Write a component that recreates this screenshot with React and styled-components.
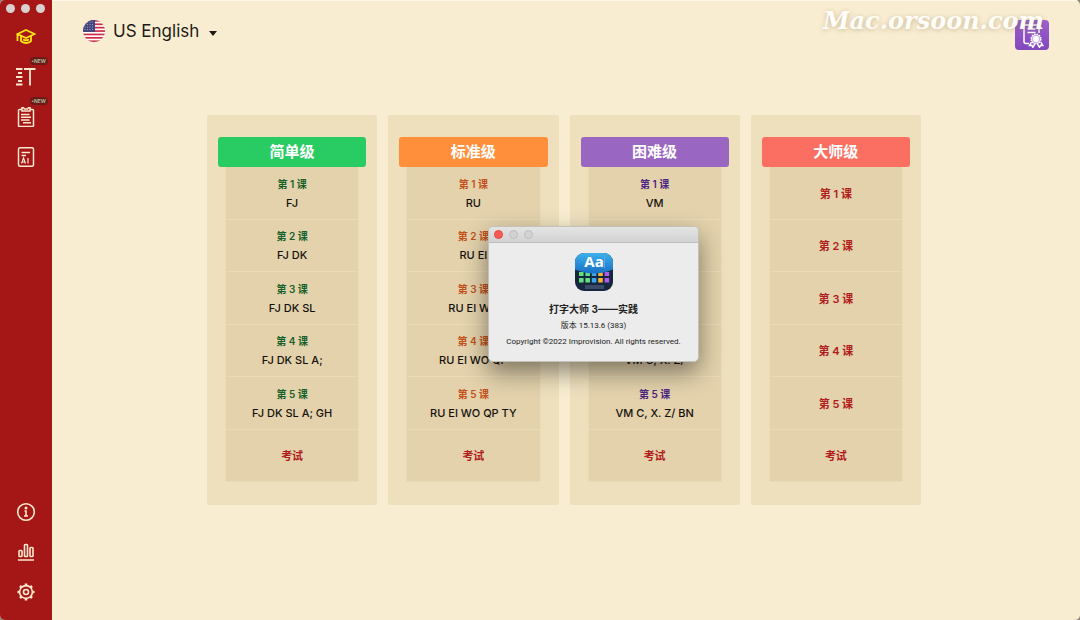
import React, {useState} from "react";
import styled, {createGlobalStyle} from "styled-components";

const levels = [
  {
    name: "简单级",
    color: "#29cc63",
    text: "#17602a",
    lessons: ["FJ", "FJ DK", "FJ DK SL", "FJ DK SL A;", "FJ DK SL A; GH"],
  },
  {
    name: "标准级",
    color: "#ff8f3a",
    text: "#c2501a",
    lessons: ["RU", "RU EI", "RU EI WO", "RU EI WO QP", "RU EI WO QP TY"],
  },
  {
    name: "困难级",
    color: "#9966c2",
    text: "#4b2480",
    lessons: ["VM", "VM C,", "VM C, X.", "VM C, X. Z/", "VM C, X. Z/ BN"],
  },
  {
    name: "大师级",
    color: "#fb6f62",
    text: "#b01c1c",
    lessons: ["", "", "", "", ""],
  },
];

const CapIcon = () => (
  <Icon viewBox="0 0 20 20" strokeWidth="1.8">
    <path d="M1.500 7 10 3l8.500 4-8.500 4zM5 9.200v5c2 2.400 8 2.400 10 0v-5M1.500 7.500V14M7 12.500q3 1.500 6 0" />
  </Icon>
);

const TextIcon = () => (
  <Icon viewBox="0 0 20 20" strokeWidth="1.8">
    <path d="M0 2h6.500M2 6h4M0 10h6.500M2 14h4M0 17.500h6.500M8 2h11.500M14 2v16.500" />
  </Icon>
);

const ClipboardIcon = () => (
  <Icon viewBox="0 0 20 20" strokeWidth="1.5">
    <path d="M6 2.500H3.500q-1 0-1 1v15q0 1 1 1h13q1 0 1-1v-15q0-1-1-1H14M6 .8h1.500l1 1.200h3l1-1.200H14V4H6zM5 7.500h8.500M5 10.200h10M5 13h8.500M7 15.800h8" />
  </Icon>
);

const AiIcon = () => (
  <Icon viewBox="0 0 20 20" strokeWidth="1.5">
    <rect x="2.500" y="0.800" width="15" height="18.400" rx="1.500" />
    <path d="M5.500 5.500h8.500M5.500 8.500H10" />
    <path d="m5.500 16.500 2-5.500 2 5.500M6 15h3M12 11v5.500" strokeWidth="1.200" />
  </Icon>
);

const InfoIcon = () => (
  <Icon viewBox="0 0 20 20" strokeWidth="1.6">
    <circle cx="10" cy="10" r="8.300" />
    <path d="M8.500 9H10v5M8 14h4" />
    <circle cx="10" cy="6" r="0.700" />
  </Icon>
);

const ChartIcon = () => (
  <Icon viewBox="0 0 20 20" strokeWidth="1.6">
    <path d="M2 18h16" />
    <rect x="3" y="8.500" width="3" height="6" rx="0.800" />
    <rect x="8.500" y="2.500" width="3" height="12" rx="0.800" />
    <rect x="14" y="5.500" width="3" height="9" rx="0.800" />
  </Icon>
);

const GearIcon = () => (
  <Icon viewBox="0 0 20 20" strokeWidth="1.6">
    <circle cx="10" cy="10" r="6.400" />
    <circle cx="10" cy="10" r="2.500" />
    <path
      d="M10 1.500v2M10 16.500v2M1.500 10h2M16.500 10h2M4 4l1.400 1.400M14.600 14.600 16 16M4 16l1.400-1.400M14.600 5.400 16 4"
      strokeWidth="2.600"
    />
  </Icon>
);

const Flag = () => (
  <svg width="22" height="22" viewBox="0 0 22 22" aria-hidden="true">
    <defs>
      <clipPath id="flagCircle">
        <circle cx="11" cy="11" r="11" />
      </clipPath>
    </defs>
    <g clipPath="url(#flagCircle)">
      <rect width="22" height="22" fill="#fff" />
      {[0, 3.4, 6.8, 10.2, 13.6, 17, 20.4].map((y) => (
        <rect key={y} y={y} width="22" height="1.700" fill="#cf2b45" />
      ))}
      <rect width="12" height="11.900" fill="#41467f" />
      {[2, 4.5, 7, 9.5].map((y) =>
        [2, 4.5, 7, 9.5].map((x) => (
          <circle key={`${x}-${y}`} cx={x} cy={y} r="0.500" fill="#b9bbd8" />
        ))
      )}
    </g>
  </svg>
);

const CertificateIcon = () => (
  <svg width="24" height="26" viewBox="0 0 24 26" fill="none" stroke="#fff" strokeWidth="1.500">
    <path d="M9 21.500H6q-2 0-2-2V3h15v8M7.500 7h8M7.500 10.500h8" />
    <path d="m11.500 20-2 3.500 2.300-.2 1 2 2-3.300M17.500 22l2 3.300 1-2 2.300.2-2-3.500" />
    <circle cx="16" cy="17" r="4.800" fill="#fff" strokeDasharray="1.500 1" />
    <circle cx="16" cy="17" r="3.800" stroke="#a57bd3" strokeWidth="0.700" />
  </svg>
);

const AppLogo = () => (
  <svg width="40" height="40" viewBox="0 0 40 40" role="img" aria-label="打字大师">
    <defs>
      <clipPath id="logoShape">
        <rect x="1" y="1" width="38" height="38" rx="9" />
      </clipPath>
      <linearGradient id="logoTop" x1="0" y1="0" x2="0" y2="1">
        <stop offset="0" stopColor="#3fb4ee" />
        <stop offset="1" stopColor="#1870c4" />
      </linearGradient>
    </defs>
    <g clipPath="url(#logoShape)">
      <rect width="40" height="40" fill="#17263f" />
      {["#62df82", "#62df82", "#3ea6ea", "#f8b436", "#b05af0"].map((fill, i) => (
        <g key={i} fill={fill}>
          <rect x={5 + i * 6.4} y="20" width="4.600" height="4" />
          <rect x={5 + i * 6.4} y="26" width="4.600" height="4.400" rx="0.500" />
        </g>
      ))}
      <rect x="11" y="33" width="19" height="4" rx="0.500" fill="#3a4a68" />
      <path d="M0 0h40v17q-20 9-40 0z" fill="url(#logoTop)" />
      <text
        x="20"
        y="15"
        textAnchor="middle"
        fill="#fff"
        fontFamily="Open Sans, sans-serif"
        fontSize="15"
        fontWeight="700">
        Aa
      </text>
      <path d="M30.500 4v12" stroke="#5fa9e6" />
    </g>
  </svg>
);

const App = () => {
  const [language, setLanguage] = useState("us");
  const [aboutOpen, setAboutOpen] = useState(true);

  return (
    <Window>
      <GlobalStyle />
      <Sidebar>
        <TrafficLights>
          <Light />
          <Light />
          <Light />
        </TrafficLights>
        <NavGroup>
          <NavButton $active aria-label="课程">
            <CapIcon />
          </NavButton>
          <NavButton aria-label="文本">
            <TextIcon />
            <NewBadge>•NEW</NewBadge>
          </NavButton>
          <NavButton aria-label="测试">
            <ClipboardIcon />
            <NewBadge>•NEW</NewBadge>
          </NavButton>
          <NavButton aria-label="AI">
            <AiIcon />
          </NavButton>
        </NavGroup>
        <NavGroup $bottom>
          <NavButton aria-label="关于" onClick={() => setAboutOpen(true)}>
            <InfoIcon />
          </NavButton>
          <NavButton aria-label="统计">
            <ChartIcon />
          </NavButton>
          <NavButton aria-label="设置">
            <GearIcon />
          </NavButton>
        </NavGroup>
      </Sidebar>

      <Main>
        <TopBar>
          <LanguagePicker>
            <Flag />
            <LanguageSelect
              aria-label="Language"
              value={language}
              onChange={(e) => setLanguage(e.target.value)}>
              <option value="us">US English</option>
            </LanguageSelect>
            <Caret viewBox="0 0 8 5">
              <path d="M0 0h8L4 5z" />
            </Caret>
          </LanguagePicker>
          <CertificateButton aria-label="证书">
            <CertificateIcon />
          </CertificateButton>
          <Watermark>Mac.orsoon.com</Watermark>
        </TopBar>

        <Levels>
          {levels.map((level) => (
            <Level key={level.name}>
              <LevelTitle $color={level.color}>{level.name}</LevelTitle>
              <Lessons>
                {level.lessons.map((keys, i) => (
                  <Lesson key={i}>
                    <LessonName $color={level.text} $large={!keys}>
                      第 {i + 1} 课
                    </LessonName>
                    {keys && <LessonKeys>{keys}</LessonKeys>}
                  </Lesson>
                ))}
                <Lesson>
                  <LessonName $color="#b01c1c" $large>
                    考试
                  </LessonName>
                </Lesson>
              </Lessons>
            </Level>
          ))}
        </Levels>
      </Main>

      {aboutOpen && (
        <About role="dialog" aria-labelledby="about-title">
          <AboutBar>
            <AboutDot $close aria-label="关闭" onClick={() => setAboutOpen(false)} />
            <AboutDot disabled aria-label="最小化" />
            <AboutDot disabled aria-label="缩放" />
          </AboutBar>
          <AboutBody>
            <AppLogo />
            <AboutTitle id="about-title">打字大师 3——实践</AboutTitle>
            <AboutText>版本 15.13.6 (383)</AboutText>
            <AboutText>Copyright ©2022 Improvision. All rights reserved.</AboutText>
          </AboutBody>
        </About>
      )}
    </Window>
  );
};

export default App;

const GlobalStyle = createGlobalStyle`
  * {
    box-sizing: border-box;
  }
  body {
    margin: 0;
    background: #8d8578;
    font-family: Inter, "Noto Sans CJK SC", sans-serif;
  }
  button, select {
    font-family: inherit;
    border: 0;
    padding: 0;
    background: none;
    cursor: pointer;
  }
`;
const Window = styled.div`
  position: relative;
  display: flex;
  min-height: 100vh;
  overflow: hidden;
  border-radius: 5px;
  background: #f9edd1;
`;
const Sidebar = styled.aside`
  display: flex;
  flex-direction: column;
  flex: none;
  width: 52px;
  padding-bottom: 8px;
  background: #a51616;
`;
const TrafficLights = styled.div`
  display: flex;
  gap: 6px;
  height: 17px;
  padding: 4px 6px;
`;
const Light = styled.span`
  width: 9px;
  height: 9px;
  border-radius: 50%;
  background: #d9d0d2;
`;
const NavGroup = styled.nav`
  display: flex;
  flex-direction: column;
  margin-top: ${(p) => (p.$bottom ? "auto" : "0")};
`;
const NavButton = styled.button`
  position: relative;
  display: flex;
  align-items: center;
  justify-content: center;
  height: 40px;
  color: ${(p) => (p.$active ? "#ffe610" : "#fbe9cf")};
`;
const Icon = styled.svg`
  width: 20px;
  height: 20px;
  fill: none;
  stroke: currentColor;
`;
const NewBadge = styled.span`
  position: absolute;
  top: 0;
  right: 4px;
  padding: 0 2px;
  border-radius: 4px;
  background: #6c1a16;
  color: #a9b49a;
  font-size: 5px;
  font-weight: 700;
  line-height: 8px;
`;
const Main = styled.main`
  flex: 1;
  min-width: 0;
  border-top: 1px solid #fff8e6;
`;
const TopBar = styled.header`
  position: relative;
  display: flex;
  align-items: center;
  justify-content: space-between;
  height: 68px;
  padding: 0 31px;
`;
const LanguagePicker = styled.label`
  display: flex;
  align-items: center;
  gap: 8px;
  height: 32px;
  margin-bottom: 8px;
`;
const LanguageSelect = styled.select`
  appearance: none;
  width: 88px;
  color: #1e1b17;
  font-size: 17px;
  line-height: 24px;
`;
const Caret = styled.svg`
  width: 8px;
  height: 5px;
  margin-top: 4px;
  fill: #1e1b17;
`;
const CertificateButton = styled.button`
  display: flex;
  align-items: center;
  justify-content: center;
  width: 34px;
  height: 30px;
  border-radius: 4px;
  background: linear-gradient(#9c62cf, #8446bd);
`;
const Watermark = styled.span`
  position: absolute;
  top: 4px;
  right: 36px;
  color: #fffdf8;
  font-family: "DejaVu Serif", serif;
  font-size: 24px;
  font-style: italic;
  font-weight: 700;
  line-height: 32px;
  text-shadow: 0 1px 5px rgba(120, 100, 60, 0.4);
  pointer-events: none;
`;
const Levels = styled.div`
  display: grid;
  grid-template-columns: repeat(4, 1fr);
  gap: 11px;
  max-width: 782px;
  margin: 46px auto;
  padding: 0 36px 0 32px;
`;
const Level = styled.section`
  display: flex;
  flex-direction: column;
  padding: 22px 11px 23px;
  border-radius: 2px;
  background: #eee0bd;
`;
const LevelTitle = styled.h2`
  margin: 0;
  border-radius: 3px;
  background: ${(p) => p.$color};
  color: #fff;
  font-size: 15px;
  font-weight: 600;
  line-height: 30px;
  text-align: center;
`;
const Lessons = styled.div`
  display: grid;
  grid-auto-rows: 1fr;
  height: 315px;
  margin: 0 7px;
  background: #e3d2ac;
`;
const Lesson = styled.button`
  display: flex;
  flex-direction: column;
  align-items: center;
  justify-content: center;
  gap: 2px;
  padding-top: 2px;
  border: solid #eadbb7;
  border-width: 0 1px 1px;
`;
const LessonName = styled.span`
  color: ${(p) => p.$color};
  font-size: ${(p) => (p.$large ? 11 : 10)}px;
  font-weight: 600;
  line-height: 16px;
`;
const LessonKeys = styled.span`
  color: #14110c;
  font-size: 11px;
  font-weight: 500;
  line-height: 18px;
`;
const About = styled.div`
  position: absolute;
  top: 226px;
  left: calc(50% - 52px);
  width: 211px;
  overflow: hidden;
  border: 1px solid #c4c1bb;
  border-radius: 5px;
  background: #ececec;
  box-shadow: 0 10px 24px rgba(0, 0, 0, 0.45);
`;
const AboutBar = styled.div`
  display: flex;
  align-items: center;
  gap: 6px;
  height: 16px;
  padding: 0 5px;
  border-bottom: 1px solid #bdbdbd;
  background: linear-gradient(#e4e4e4, #d2d2d2);
`;
const AboutDot = styled.button`
  width: 9px;
  height: 9px;
  border: 1px solid ${(p) => (p.$close ? "#e2483f" : "#bdbdbd")};
  border-radius: 50%;
  background: ${(p) => (p.$close ? "#fc5b54" : "#d2d2d2")};
`;
const AboutBody = styled.div`
  display: flex;
  flex-direction: column;
  align-items: center;
  padding: 9px 0 11px;
`;
const AboutTitle = styled.h1`
  margin: 8px 0 0;
  color: #222;
  font-size: 10px;
  font-weight: 700;
  line-height: 18px;
`;
const AboutText = styled.p`
  margin: 0;
  color: #222;
  font-family: Roboto, "Noto Sans CJK SC", sans-serif;
  font-size: 8px;
  line-height: 16px;
  white-space: nowrap;
`;
